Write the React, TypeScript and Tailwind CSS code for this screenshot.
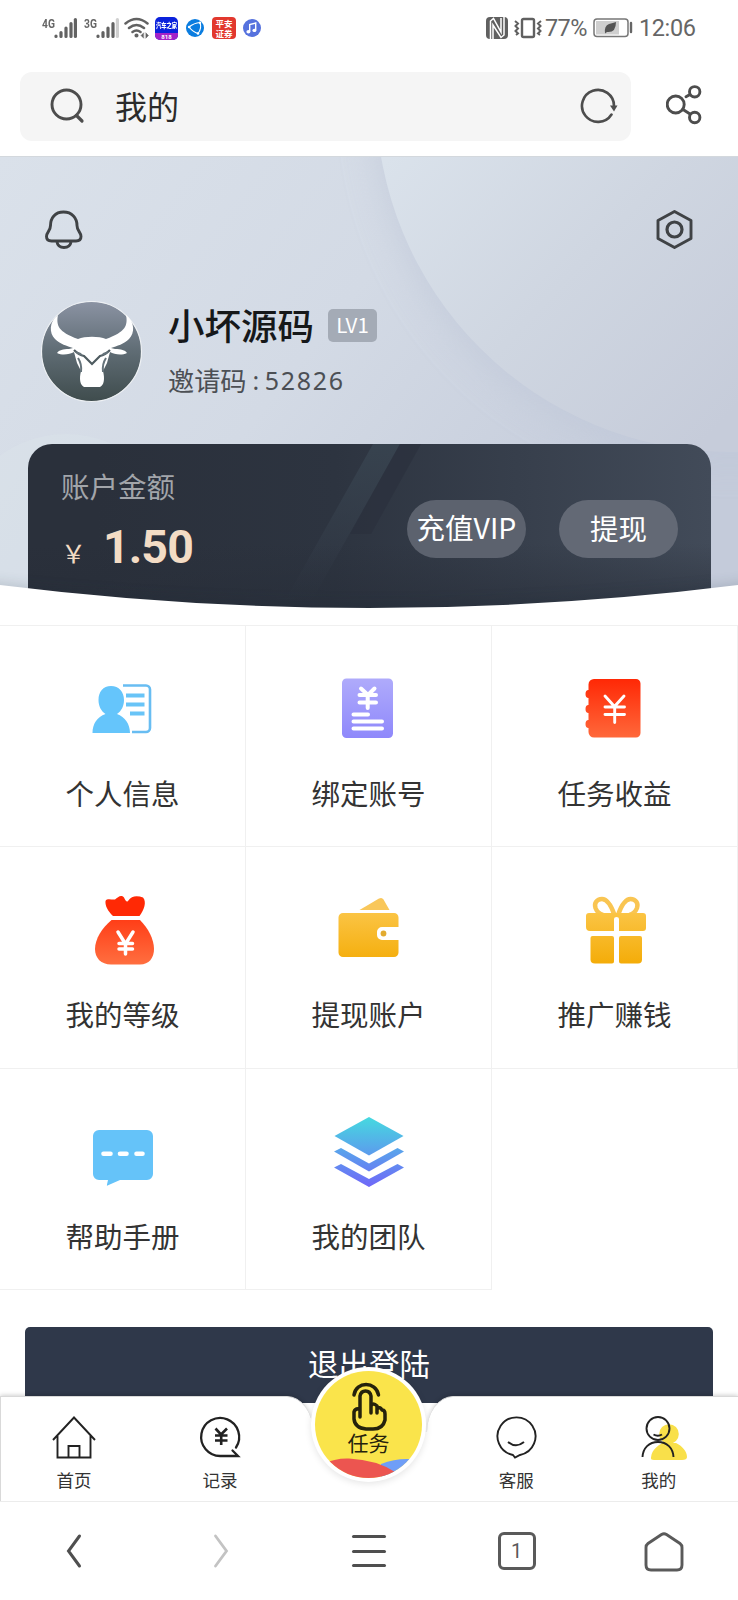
import * as React from "react"

const FONT = "font-['Noto_Sans_CJK_SC',sans-serif]"

function SignalBars({ label, weak }: { label: string; weak?: boolean }) {
  return (
    <div className="flex h-[22px] w-[35px] justify-between">
      <span className="w-[12px] origin-left [transform:scaleX(0.76)] font-['Roboto'] text-[13.5px] leading-[13px] font-bold text-[#666]">
        {label}
      </span>
      <svg width="23" height="22" viewBox="0 0 23 22">
        <g stroke="#626262" strokeWidth="3.2" strokeLinecap="round">
          <path d="M2 19.5v-.5M7 19.5v-4M12 19.5v-8.5M17 19.5V6.5" />
          <path d="M21.4 19.5V2.5" stroke={weak ? "#cfcfcf" : "#626262"} />
        </g>
      </svg>
    </div>
  )
}

function StatusBar() {
  return (
    <div className="flex h-[72px] items-start justify-between pt-4 pr-[42px] pl-[42px] text-[#666]">
      <div className="flex h-6 items-center">
        <SignalBars label="4G" />
        <div className="w-[7px]" />
        <SignalBars label="3G" weak />
        <svg className="ml-[5px]" width="26" height="22" viewBox="0 0 26 22" fill="none" stroke="#626262" strokeWidth="2.5" strokeLinecap="round">
          <path d="M1.5 6.5q11-9 22 0M5 11q7.500-6 15 0M8.500 15q4-3 8 0" />
          <circle cx="12.500" cy="18.500" r="1.300" fill="#626262" strokeWidth="1.5" />
          <path d="M19.500 16l-2.500 2.500 2.500 2.500zM22 16l2.500 2.500L22 21z" fill="#626262" strokeWidth=".5" />
        </svg>
        <div className="ml-[5px] flex size-[23px] flex-col overflow-hidden rounded-[5px] bg-[#0b22dc] text-white">
          <span className={`${FONT} mt-[5px] h-[11px] [transform:scaleY(1.25)] text-center text-[5.3px] leading-[8px] font-black whitespace-nowrap`}>
            汽车之家
          </span>
          <span className="h-[7px] bg-[#a322c8] text-center font-['Roboto'] text-[6px] leading-[7px] font-bold">818</span>
        </div>
        <svg className="ml-[8px]" width="18" height="18" viewBox="0 0 18 18" fill="none">
          <circle cx="9" cy="9" r="9" fill="#0a7de0" />
          <path d="M3 8Q8 4 14 3.500M3 8q4 5 9 6.500M14 3.500q2 6-2 11" stroke="#fff" strokeWidth="1.200" />
          <circle cx="3.200" cy="8" r="1.300" fill="#fff" />
          <circle cx="14" cy="3.700" r="1.200" fill="#fff" />
          <circle cx="12" cy="14.500" r="1.300" fill="#fff" />
        </svg>
        <div className={`${FONT} ml-[8px] flex h-[22px] w-[24px] flex-col items-center justify-center rounded-[4px] bg-[#e2382e] text-[8.5px] leading-[10.5px] font-bold text-white`}>
          <span>平安</span>
          <span>证券</span>
        </div>
        <svg className="ml-[7px]" width="18" height="18" viewBox="0 0 18 18">
          <circle cx="9" cy="9" r="9" fill="#5672de" />
          <path d="M6.700 12.500V5.500l6-1.500v7" stroke="#fff" strokeWidth="1.400" fill="none" />
          <ellipse cx="5.400" cy="12.700" rx="2" ry="1.700" fill="#fff" />
          <ellipse cx="11.400" cy="11.400" rx="2" ry="1.700" fill="#fff" />
        </svg>
      </div>
      <div className="flex h-6 items-center font-['Roboto'] text-[23.5px] leading-6">
        <svg width="22" height="22" viewBox="0 0 22 22">
          <rect width="22" height="22" rx="4" fill="#606060" />
          <path d="M4.500 22V4l3-2.500L15 15V1M18 0V18l-3 2.500L7 8v14" fill="none" stroke="#fff" strokeWidth="1.500" />
        </svg>
        <svg className="ml-[6px]" width="28" height="22" viewBox="0 0 28 22" fill="none" stroke="#606060">
          <rect x="8" y="2" width="12" height="18" rx="1.500" strokeWidth="2.400" />
          <path d="M1 4l3 2.500L1.500 9 4 11.500 1.500 14 4 16.500 2 18M27 4l-3 2.500L26.500 9 24 11.500l2.500 2.500-2.500 2.500 2 1.500" strokeWidth="2" />
        </svg>
        <span className="ml-[3px] w-[42px] tracking-[-0.6px]">77%</span>
        <svg className="ml-[6px]" width="40" height="20" viewBox="0 0 40 20">
          <rect x="1" y="1" width="34" height="17.500" rx="3" fill="none" stroke="#777" strokeWidth="1.500" />
          <rect x="3" y="3" width="23" height="13.500" fill="#cfcfcf" />
          <path d="M12 15q-1-7 4-9 4-1 7-2 0 11-9 10l-2 1.500z" fill="#555" />
          <path d="M38 5v9" stroke="#666" strokeWidth="2.400" strokeLinecap="round" />
        </svg>
        <span className="ml-[6px] w-[57px] tracking-[-0.4px]">12:06</span>
      </div>
    </div>
  )
}

function AddressBar() {
  return (
    <div className="flex h-[84px] items-start pl-[20px]">
      <div className="flex h-[69px] w-[611px] items-center rounded-[12px] bg-[#f5f5f5] pr-[12px] pb-[2px] pl-[30px]">
        <svg width="36" height="36" viewBox="0 0 36 36" fill="none" stroke="#4d4d4d" strokeWidth="2.900">
          <circle cx="16.500" cy="16.500" r="14.500" />
          <path d="M26.500 27.500l5.500 5.500" strokeWidth="3.200" strokeLinecap="round" />
        </svg>
        <span className="ml-[29px] flex-1 pb-[2px] text-[32px] leading-[40px] text-[#2b2b2b]">我的</span>
        <svg width="40" height="36" viewBox="0 0 40 36">
          <path d="M32.500 26.500A16 16 0 1 1 35 18" fill="none" stroke="#4d4d4d" strokeWidth="2.600" strokeLinecap="round" />
          <path d="M31 17.500h7.500l-3.500 6z" fill="#4d4d4d" />
        </svg>
      </div>
      <svg className="mt-[12px] ml-[35px]" width="36" height="42" viewBox="0 0 36 42" fill="none" stroke="#4d4d4d" strokeWidth="2.900" strokeLinecap="round">
        <circle cx="9.700" cy="20.500" r="8.500" />
        <circle cx="28.700" cy="7.800" r="5.200" />
        <circle cx="28.700" cy="33.500" r="5.200" />
        <path d="M20 12.800l4-2.300M17 25.500l7 4.500" />
      </svg>
    </div>
  )
}

function BullAvatar() {
  return (
    <svg width="102" height="102" viewBox="0 0 102 102">
      <defs>
        <linearGradient id="avatar" x1="0" y1="0" x2="0" y2="1">
          <stop offset="0" stopColor="#8b93a3" />
          <stop offset=".5" stopColor="#5f6c74" />
          <stop offset="1" stopColor="#3f4c4d" />
        </linearGradient>
      </defs>
      <circle cx="50.500" cy="50.500" r="50" fill="url(#avatar)" stroke="#eef1f4" strokeWidth="1.200" />
      <path
        d="M17 14C8 21 8 32 14 38C19 43 26 45 32 47L28 48C22 48 18 49 16 52C22 55 29 53 33 51L36 62L40 70C38 78 39 84 43 86H59C63 84 64 78 62 70L66 62L69 51C73 53 80 55 86 52C84 49 80 48 74 48L70 47C76 45 83 43 88 38C94 32 94 21 85 14C87 24 85 31 65 38C58 35 44 35 37 38C17 31 15 24 17 14Z"
        fill="#fff"
      />
      <path d="M33 49q5 5 10 6l8 8 8-8q5-1 10-6" fill="none" stroke="#4e5b60" strokeWidth="2.200" />
      <path d="M37 57q4 6 3 14M65 57q-4 6-3 14" fill="none" stroke="#65737a" strokeWidth="2" />
      <path d="M34 50l6 2 2 3-6-2zM68 50l-6 2-2 3 6-2z" fill="#65737a" />
    </svg>
  )
}

function HeroBackground() {
  return (
    <svg className="absolute inset-0" width="738" height="469" viewBox="0 0 738 469">
      <defs>
        <linearGradient id="sky" x1="0" y1="0" x2="1" y2=".5">
          <stop offset="0" stopColor="#dae1ea" />
          <stop offset=".5" stopColor="#d3dae5" />
          <stop offset="1" stopColor="#c4cbda" />
        </linearGradient>
        <linearGradient id="disc" gradientUnits="userSpaceOnUse" x1="390" y1="0" x2="700" y2="290">
          <stop offset="0" stopColor="#dae2eb" />
          <stop offset=".5" stopColor="#cfd6e1" />
          <stop offset="1" stopColor="#c6ccda" />
        </linearGradient>
        <filter id="soft" x="-20%" y="-20%" width="140%" height="140%">
          <feGaussianBlur stdDeviation="18" />
        </filter>
      </defs>
      <rect width="738" height="469" fill="url(#sky)" />
      <circle cx="729" cy="-51" r="354" fill="#bfc7d8" filter="url(#soft)" opacity=".65" />
      <circle cx="731" cy="-59" r="355" fill="url(#disc)" />
      <circle cx="66" cy="390" r="112" fill="#dde4ec" opacity=".35" />
      <path d="M0 .5H738" stroke="#d3d8dd" />
    </svg>
  )
}

function Hero() {
  return (
    <div className="relative h-[469px] overflow-hidden">
      <HeroBackground />
      <div className="relative flex justify-between px-[45px] pt-[54px]">
        <svg width="38" height="41" viewBox="0 0 38 41" fill="none" stroke="#3f4245" strokeWidth="2.900">
          <path d="M18.500 2C10 2 5.500 8 5.500 15.500C5.500 21 1.500 22 1.500 26.500C1.500 29.500 3.500 31 6.500 31H31C34 31 36 29.500 36 26.500C36 22 32 21 32 15.500C32 8 27 2 18.500 2Z" />
          <path d="M12 32q1 5.500 7 5.500t7-5.500" />
        </svg>
        <svg width="37" height="41" viewBox="0 0 37 41" fill="none" stroke="#3f4245" strokeWidth="2.900" strokeLinejoin="round">
          <path d="M18.500 1.500L35 10.500V28.500L18.500 37.500L2 28.500V10.500Z" />
          <circle cx="18.500" cy="19.500" r="7.500" strokeWidth="3.200" />
        </svg>
      </div>
      <div className="relative mt-[50px] flex pl-[41px]">
        <BullAvatar />
        <div className="pl-[25px]">
          <div className="flex items-center pt-[4px]">
            <span className="text-[36.5px] leading-[40px] font-medium text-[#16181a]">小坏源码</span>
            <span className="ml-[14px] flex h-[33px] w-[49px] items-center justify-center rounded-[5px] bg-[#a4abb6] pb-[3px] text-[20.5px] leading-[20px] text-white">
              LV1
            </span>
          </div>
          <div className="mt-[19px] flex text-[26.2px] leading-[32px] text-[#4c4f54]">
            邀请码
            <span className="pl-[6px] font-['Noto_Sans'] text-[25px] tracking-[1.4px]">:</span>
            <span className="pl-[4px] font-['Noto_Sans'] text-[25px] tracking-[1.7px]">52826</span>
          </div>
        </div>
      </div>
      <div className="relative mt-[41px] ml-[28px] h-[181px] w-[683px] overflow-hidden rounded-t-[24px] bg-linear-to-r from-[#2a303b] from-10% via-[#2d3440] via-45% to-[#424b59]">
        <svg className="absolute inset-0" width="683" height="181">
          <defs>
            <linearGradient id="ray" x1="0" y1="0" x2="0" y2="1">
              <stop offset="0" stopColor="#384450" stopOpacity=".9" />
              <stop offset="1" stopColor="#39424f" stopOpacity="0" />
            </linearGradient>
            <linearGradient id="floor" x1="0" y1="0" x2="0" y2="1">
              <stop offset=".55" stopColor="#272d38" stopOpacity="0" />
              <stop offset="1" stopColor="#272d38" stopOpacity=".75" />
            </linearGradient>
          </defs>
          <path d="M345 0H372L282 160H255Z" fill="url(#ray)" />
          <path d="M372 0H393L343 90L322 90Z" fill="#2b313d" opacity=".7" />
          <rect width="683" height="181" fill="url(#floor)" />
        </svg>
        <div className="relative flex justify-between pr-[33px] pl-[33px]">
          <div>
            <div className="mt-[24px] text-[28.5px] leading-[36px] text-[#a2a5aa]">账户金额</div>
            <div className="mt-[19px] flex items-baseline text-[#f3dcc5]">
              <span className="w-[42px] text-[25px] leading-[48px]">￥</span>
              <span className="font-['Roboto'] text-[46.5px] leading-[48px] font-bold tracking-[-0.9px]">1.50</span>
            </div>
          </div>
          <div className="mt-[56px] flex gap-[33px] text-[28.5px] text-white">
            <button className="h-[58px] w-[119px] rounded-full bg-[#5c626e] pb-[4px] leading-[52px] whitespace-nowrap">充值VIP</button>
            <button className="h-[58px] w-[119px] rounded-full bg-[#636975] pb-[3px] leading-[54px]">提现</button>
          </div>
        </div>
      </div>
      <svg className="absolute bottom-0 left-0" width="738" height="80" viewBox="0 0 738 80">
        <defs>
          <filter id="lift" x="-5%" y="-60%" width="110%" height="200%">
            <feGaussianBlur stdDeviation="7" />
          </filter>
        </defs>
        <path d="M-20 37Q369 81 758 37V90H-20Z" fill="#1f2937" opacity=".18" filter="url(#lift)" />
        <path d="M0 40Q369 86 738 40V80H0Z" fill="#fff" />
      </svg>
    </div>
  )
}

function Icon({ children }: { children: React.ReactNode }) {
  return (
    <svg width="80" height="80" viewBox="0 0 80 80">
      {children}
    </svg>
  )
}

function Grad({ id, from, to }: { id: string; from: string; to: string }) {
  return (
    <linearGradient id={id} gradientUnits="userSpaceOnUse" x1="0" y1="6" x2="0" y2="74">
      <stop offset="0" stopColor={from} />
      <stop offset="1" stopColor={to} />
    </linearGradient>
  )
}

const menu = [
  {
    label: "个人信息",
    icon: (
      <Icon>
        <g transform="translate(0 -1)">
          <path d="M40 17.500H63a4 4 0 0 1 4 4V60a4 4 0 0 1-4 4H49" fill="none" stroke="#68bdf2" strokeWidth="2.600" />
          <path d="M43 27.500H61.500M43 36.500H61.500M47 45.500H61.500" stroke="#68c4f7" strokeWidth="4" />
          <path d="M28 18C20 18 15.500 24 15.500 32C15.500 38 18 43 22.500 46C14 49 9.500 56 9.500 65H47C47 56 42 49 34 46C38.500 43 41 38 41 32C41 24 36 18 28 18Z" fill="#65c5fb" />
        </g>
      </Icon>
    ),
  },
  {
    label: "绑定账号",
    icon: (
      <Icon>
        <defs>
          <Grad id="violet" from="#b1adfb" to="#8c85fb" />
        </defs>
        <rect x="13" y="9.500" width="51" height="59.500" rx="4.500" fill="url(#violet)" />
        <path d="M32 19.500l7 6.500 6.500-6.500M30.500 26H47M30.500 33.500H47M38.700 27V39" stroke="#fff" strokeWidth="4" strokeLinecap="round" fill="none" />
        <path d="M24.500 45.500H39M24.500 52.500H53M24.500 59.500H53" stroke="#fff" strokeWidth="4" strokeLinecap="round" />
      </Icon>
    ),
  },
  {
    label: "任务收益",
    icon: (
      <Icon>
        <defs>
          <Grad id="red" from="#ff2402" to="#ff6e3f" />
        </defs>
        <path
          d="M19 10H61a4.500 4.500 0 0 1 4.500 4.500V64a4.500 4.500 0 0 1-4.500 4.500H19a5.500 5.500 0 0 1-5.500-5.500V59a3 4 0 0 1 0-8V44a3 4 0 0 1 0-8V29a3 4 0 0 1 0-8V15.500a5.500 5.500 0 0 1 5.500-5.500Z"
          fill="url(#red)"
        />
        <path d="M30 27L39.500 37.500 49 27M30 38H49.500M30 45.500H49.500M39.700 37.500V53.500" stroke="#fff" strokeWidth="2.900" strokeLinecap="round" fill="none" />
      </Icon>
    ),
  },
  {
    label: "我的等级",
    icon: (
      <Icon>
        <path
          d="M30 26C25 21 22 16 22.500 11C24 8 29 10 32 9.500C35 7 38 4 41 7.500C42 9 43 13 45 11C49 5 55 6 60 7.500C64 12 61 20 56.500 26Z"
          fill="#ff2905"
        />
        <path d="M28.500 30H57C65 38 71 49 71 59C71 68 66 74.500 57 74.500H28C18 74.500 12 68 12 59C12 49 19 38 28.500 30Z" fill="url(#red)" />
        <path d="M35 42L42.500 54 50 42M36 53.500H49.500M36 59H49.500M42.500 54V64" stroke="#fff" strokeWidth="3.500" strokeLinecap="round" fill="none" />
      </Icon>
    ),
  },
  {
    label: "提现账户",
    icon: (
      <Icon>
        <defs>
          <Grad id="gold" from="#fdcc58" to="#f4ac08" />
        </defs>
        <g transform="translate(-1 0)">
          <path d="M31.500 20L51 8.500Q54 7 55.500 9.500L61.500 20Z" fill="#f9c75a" />
          <path
            d="M15 23H66a4.500 4.500 0 0 1 4.500 4.500V37H54a5 5 0 0 0-5 5V45a5 5 0 0 0 5 5H70.500V62.500a4.500 4.500 0 0 1-4.500 4.500H15a4.500 4.500 0 0 1-4.500-4.500V27.500A4.500 4.500 0 0 1 15 23Z"
            fill="url(#gold)"
          />
          <circle cx="55.500" cy="43.500" r="2.900" fill="#e2ab30" />
        </g>
      </Icon>
    ),
  },
  {
    label: "推广赚钱",
    icon: (
      <Icon>
        <path d="M39.500 25C36 15 32 9 27 9C21.500 9 19 13.500 20.500 18C22 22 25 24 28 25M43 25C46.500 15 50.500 9 55.500 9C61 9 63.500 13.500 62 18C60.500 22 57.500 24 54.500 25" stroke="#f9c552" strokeWidth="4.500" fill="none" />
        <path
          d="M14 23H68Q71 23 71 26V38Q71 41 68 41H44V29Q44 27 41.500 27Q39 27 39 29V41H15Q11 41 11 37V26Q11 23 14 23Z"
          fill="url(#gold)"
        />
        <path d="M17.500 46H37Q39 46 39 48V71.500Q39 73.500 37 73.500H20Q15.500 73.500 15.500 69.500V48Q15.500 46 17.500 46Z" fill="url(#gold)" />
        <path d="M46 46H65Q67 46 67 48V69.500Q67 73.500 63 73.500H46Q44 73.500 44 71.500V48Q44 46 46 46Z" fill="url(#gold)" />
      </Icon>
    ),
  },
  {
    label: "帮助手册",
    icon: (
      <Icon>
        <path
          d="M16 18H64A6 6 0 0 1 70 24V62A6 6 0 0 1 64 68H37L24.500 73.500Q23.500 74 24 72.500L25 68H16A6 6 0 0 1 10 62V24A6 6 0 0 1 16 18Z"
          fill="#65c3f9"
        />
        <path d="M20.500 41.700H27.500M37 41.700H43.500M53.500 41.700H59.500" stroke="#fff" strokeWidth="4.600" strokeLinecap="round" />
      </Icon>
    ),
  },
  {
    label: "我的团队",
    icon: (
      <Icon>
        <defs>
          <Grad id="stack" from="#46d8e0" to="#6f68f8" />
        </defs>
        <g transform="translate(-.5 0)">
          <path d="M40.500 5L75 24 40.500 43.500 6 24Z" fill="url(#stack)" />
          <path d="M5.500 39.500L12.500 36 40.500 51.500 69 36 75.500 39.500 40.500 59.500Z" fill="url(#stack)" />
          <path d="M5.500 55.500L12.500 52 40.500 67 69 52 75.500 55.500 40.500 75Z" fill="url(#stack)" />
        </g>
      </Icon>
    ),
  },
]

function MenuGrid() {
  return (
    <div className="grid h-[665px] grid-cols-3 grid-rows-3 border-t border-[#f0f0f0]">
      {menu.map((item) => (
        <div key={item.label} className="flex flex-col items-center border-r border-b border-[#f0f0f0] pt-[43px]">
          {item.icon}
          <span className="mt-[25px] text-[28.5px] leading-[38px] text-[#333]">{item.label}</span>
        </div>
      ))}
    </div>
  )
}

function Tab({ label, className, children }: { label: string; className?: string; children: React.ReactNode }) {
  return (
    <div className={`flex flex-1 flex-col items-center pt-[17px] ${className ?? ""}`}>
      <svg width="46" height="46" viewBox="0 0 46 46" fill="none" stroke="#222" strokeWidth="1.900" className="overflow-visible">
        {children}
      </svg>
      <span className="mt-[8px] text-[17.5px] leading-[24px] text-[#333]">{label}</span>
    </div>
  )
}

function TabBar() {
  return (
    <div className="absolute top-[1370px] left-0 h-[132px] w-[738px]">
      <div className="flex h-full justify-between border-b border-[#ececec] pt-[26px]">
        <div className="flex w-[313px] rounded-tr-[26px_36px] border-t border-l border-[#d9d9d9] bg-white pr-[20px] shadow-[0_-1px_4px_rgba(0,0,0,0.18)] [clip-path:inset(-8px_-8px_0_0)]">
          <Tab label="首页">
            <path d="M2 26L23 3.500 44 26M6.500 22V43.500H39.500V22M17.500 43V32H28.500V43" />
          </Tab>
          <Tab label="记录">
            <g transform="translate(1.5 0)">
              <path d="M37.500 33.500A19 19 0 1 0 22 42H39.500L34 36.500" strokeWidth="2.300" strokeLinecap="round" />
              <path d="M17 14.500L22.500 20.500 28.500 14.500M16.500 21.500H29M16.500 26.500H29M22.700 20V31" strokeWidth="2.600" />
            </g>
          </Tab>
        </div>
        <div className="flex w-[311px] rounded-tl-[26px_36px] border-t border-[#d9d9d9] bg-white pl-[18px] shadow-[0_-1px_4px_rgba(0,0,0,0.18)] [clip-path:inset(-8px_0_0_-8px)]">
          <Tab label="客服">
            <path d="M20 41A19 19 0 1 1 27 41L22 43.500Z" />
            <path d="M15 28q8 6.500 16 0" />
          </Tab>
          <Tab label="我的" className="pr-[8px]">
            <g transform="translate(-2 0)">
              <g fill="#f9e04a" stroke="none">
                <circle cx="35" cy="20" r="9.800" />
                <path d="M17 43.500C18 35 24 32 28 29H42C48 32 53 37 53 43Q53 46 48 46H20Q16.500 46 17 43.500Z" />
              </g>
              <circle cx="24" cy="14.500" r="11.500" />
              <path d="M8.500 43C9 34 15 28 24 28S39 34 39.500 43M19.500 20.500q4.500 2.500 8.500 0" />
            </g>
          </Tab>
        </div>
      </div>
      {/* seam between the two halves, below the curved corners */}
      <div className="absolute top-[62px] left-[302px] h-[69px] w-[134px] bg-white" />
      <div className="absolute -top-[3px] left-[311px] flex size-[115px] flex-col items-center rounded-full bg-white p-[4px] shadow-[0_2px_7px_rgba(0,0,0,0.1)]">
        <div className="relative flex size-[107px] flex-col items-center overflow-hidden rounded-full bg-[#fae44b]">
          <svg className="absolute bottom-0 left-0" width="107" height="24" viewBox="0 0 107 24">
            <path d="M66 10Q80 4.500 94 5L107 8V24H66Z" fill="#6f9ef7" />
            <path d="M8 10Q20 4 34 4.500Q62 6 80 18L70 24H0Z" fill="#ec5550" />
          </svg>
          <svg className="mt-[11px]" width="36" height="50" viewBox="0 0 36 50" fill="none" stroke="#25220c" strokeWidth="3.500" strokeLinecap="round" strokeLinejoin="round">
            <path d="M3 13C5 -1 25 -1 27.500 13" />
            <path d="M9 35V14Q10 9 14.500 9Q19 9 20 14V31V24Q22 20 26 24V31M26 27Q29 24 31 28Q34 28 34 32V38Q32 47 22 47H15Q4 46 3 37V30Q4 26 9 27" />
          </svg>
          <span className="relative -mt-[3px] text-[21px] leading-[26px] text-[#25220c]">任务</span>
        </div>
      </div>
    </div>
  )
}

function BrowserBar() {
  return (
    <div className="absolute top-[1502px] left-0 flex h-[98px] w-[738px] bg-white">
      <div className="flex flex-1 justify-center pt-[31px]">
        <svg width="16" height="36" viewBox="0 0 16 36" fill="none" stroke="#4f4f4f" strokeWidth="3" strokeLinecap="round">
          <path d="M13.500 3L2.500 18 13.500 33" />
        </svg>
      </div>
      <div className="flex flex-1 justify-center pt-[31px]">
        <svg width="16" height="36" viewBox="0 0 16 36" fill="none" stroke="#c3c3c3" strokeWidth="2.800" strokeLinecap="round">
          <path d="M2.500 3L13.500 18 2.500 33" />
        </svg>
      </div>
      <div className="flex flex-1 flex-col items-center gap-[11.5px] pt-[33px]">
        <div className="h-[3px] w-[34px] rounded-full bg-[#4f4f4f]" />
        <div className="h-[3px] w-[34px] rounded-full bg-[#4f4f4f]" />
        <div className="h-[3px] w-[34px] rounded-full bg-[#4f4f4f]" />
      </div>
      <div className="flex flex-1 justify-center pt-[30px]">
        <div className="flex size-[38px] items-center justify-center rounded-[6px] border-[3px] border-[#5a5a5a] font-['Roboto'] text-[20px] leading-none text-[#5a5a5a]">
          1
        </div>
      </div>
      <div className="flex flex-1 justify-center pt-[30px]">
        <svg width="40" height="40" viewBox="0 0 40 40" fill="none" stroke="#5a5a5a" strokeWidth="2.900">
          <path d="M17.500 2.500Q20 1 22.500 2.500L36 11.500Q38 13 38 15.500V33Q38 38 33 38H7Q2 38 2 33V15.500Q2 13 4 11.500Z" />
        </svg>
      </div>
    </div>
  )
}

export default function App() {
  return (
    <div className={`relative h-[1600px] w-[738px] overflow-hidden bg-white ${FONT}`}>
      <StatusBar />
      <AddressBar />
      <Hero />
      <MenuGrid />
      <div className="mx-[25px] mt-[37px] h-[76px] rounded-t-[5px] bg-[#2f384a] text-center text-[30.5px] leading-[73px] text-white">
        退出登陆
      </div>
      <TabBar />
      <BrowserBar />
    </div>
  )
}
